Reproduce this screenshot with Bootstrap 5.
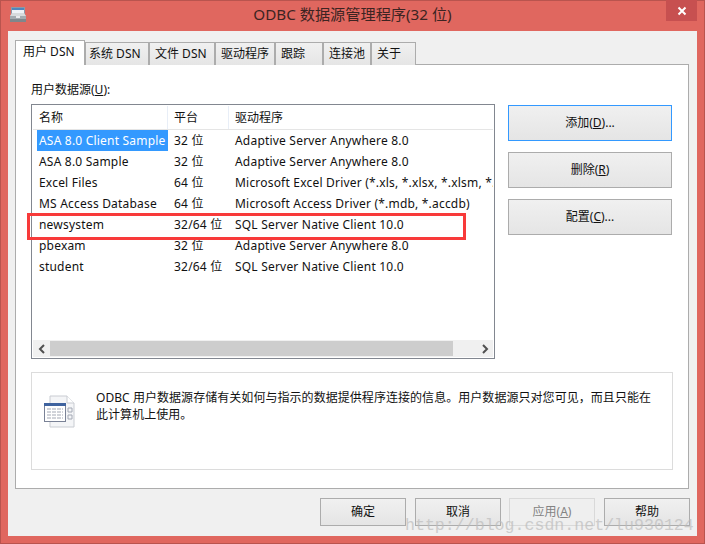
<!DOCTYPE html>
<html lang="zh">
  <head>
    <meta charset="UTF-8" />
    <title>ODBC 数据源管理程序(32 位)</title>
    <link href="https://cdn.jsdelivr.net/npm/bootstrap@5.3.0/dist/css/bootstrap.min.css" rel="stylesheet" />
    <style>
      html, body { height: 100%; }
      body {
        background: #e0675f;
        font-family: "Noto Sans", "Noto Sans CJK SC", sans-serif;
        font-size: 12px;
        line-height: 16px;
        color: #111;
        overflow: hidden;
      }
      .win { width: 705px; height: 544px; position: relative; border: 1px solid #b9544e; padding: 0 7px 7px; }
      .win-title { height: 30px; position: relative; }
      .win-icon { position: absolute; left: 2px; top: 6px; }
      .win-name { flex: 1; text-align: center; font-size: 15.2px; line-height: 27px; color: #3c2422; }
      .win-close { position: absolute; right: 0; top: -1px; width: 31px; height: 21px; background: #c75050; }
      .win-body { height: 505px; background: #f0f0f0; padding: 9px 7px 0; }
      .dlg-tabs { height: 25px; margin-bottom: -1px; position: relative; z-index: 1; align-items: flex-end; }
      .dlg-tab {
        height: 23px; border: 1px solid #acacac; border-bottom: 0; padding-left: 5px;
        background: linear-gradient(#f0f0f0, #e5e5e5); line-height: 22px;
      }
      .dlg-tab.on { height: 25px; width: 70px; background: #fff; padding-left: 7px; }
      .dlg-tab:nth-child(2) { width: 64px; padding-left: 3px; }
      .dlg-tab:nth-child(3) { width: 66px; }
      .dlg-tab:nth-child(4) { width: 60px; }
      .dlg-tab:nth-child(5) { width: 48px; }
      .dlg-tab:nth-child(6) { width: 48px; }
      .dlg-tab:nth-child(7) { width: 45px; }
      .dlg-page { height: 425px; width: 674px; background: #fff; border: 1px solid #acacac; padding: 17px 15px 0; }
      .src-label { margin-bottom: 6px; }
      .src-list { width: 464px; height: 255px; border: 1px solid #828790; padding: 1px; position: relative; }
      .src-head { height: 24px; border-bottom: 1px solid #e5e5e5; }
      .src-head div { line-height: 23px; padding-left: 6px; }
      .src-head .col-a, .src-head .col-b { border-right: 1px solid #e8eef7; }
      .col-a { width: 135px; flex: none; }
      .col-b { width: 61px; flex: none; }
      .col-c { flex: 1; overflow: hidden; white-space: nowrap; }
      .src-rows { flex: 1; }
      .src-row { height: 21px; line-height: 21px; letter-spacing: .2px; }
      .src-row > div { padding-left: 6px; white-space: nowrap; }
      .src-sel { display: inline-block; background: #3399ff; color: #fff; margin-left: -2px; width: 131px; padding-left: 2px; height: 21px; }
      .red-mark { position: absolute; left: -5px; top: 108px; width: 439px; height: 27px; border: 3px solid #f83a3a; }
      .src-scroll { height: 17px; background: #f0f0f0; margin-top: auto; }
      .src-scroll .thumb { flex: 1; background: #cdcdcd; height: 15px; margin-right: 23px; }
      .src-scroll .arrow { width: 17px; flex: none; text-align: center; }
      .side-btns { width: 164px; margin-left: 13px; margin-top: 1px; gap: 11px; }
      .win-btn {
        display: block; border: 1px solid #acacac; background: linear-gradient(#f0f0f0, #e5e5e5);
        color: #111; font-size: 12px; line-height: 16px; padding: 0; border-radius: 0; text-align: center;
      }
      .side-btns .win-btn { height: 36px; }
      .win-btn.act { border-color: #3399ff; }
      .win-btn.off { color: #838383; border-color: #d9d9d9; background: #efefef; }
      .info-box { height: 98px; width: 642px; border: 1px solid #dcdcdc; margin-top: 13px; padding: 16px 12px; }
      .info-icon { margin-top: 6px; }
      .info-text { line-height: 17px; margin-left: 20px; width: 565px; letter-spacing: .05px; }
      .dlg-foot { gap: 9px; padding-top: 9px; padding-left: 305px; }
      .dlg-foot .win-btn { width: 86px; height: 28px; }
      .dlg-foot .win-btn.off { margin-left: -1px; }
      .mark-text {
        position: absolute; left: 404px; top: 515px; font-family: "Liberation Mono", monospace;
        font-size: 16.6px; line-height: 20px; color: #bdbdbd; opacity: .7; pointer-events: none;
      }
      u { text-underline-offset: 1px; }
    </style>
  </head>
  <body>
    <div class="win">
      <!-- title bar -->
      <div class="win-title d-flex">
        <svg class="win-icon" width="16" height="16" viewBox="0 0 16 16">
          <rect x="1.5" y="0.5" width="13" height="8" fill="#eef2f6" stroke="#8a9aa8" />
          <rect x="2" y="1" width="12" height="2" fill="#4f86bd" />
          <path d="M0 9l2-3h12l2 3v6H0z" fill="#a4abb0" />
          <path d="M0 9l2-3h12l2 3z" fill="#d6dadc" />
          <path d="M0 12h16v3H0z" fill="#7f878c" />
          <rect x="6" y="9" width="4" height="2" fill="#e8eaec" />
        </svg>
        <div class="win-name">ODBC 数据源管理程序(32 位)</div>
        <div class="win-close d-flex align-items-center justify-content-center">
          <svg width="10" height="10" viewBox="0 0 10 10"><path d="M1.5 1.5l7 7M8.5 1.5l-7 7" stroke="#fff" stroke-width="2" /></svg>
        </div>
      </div>

      <div class="win-body">
        <div class="dlg-tabs d-flex">
          <div class="dlg-tab on">用户 DSN</div>
          <div class="dlg-tab">系统 DSN</div>
          <div class="dlg-tab">文件 DSN</div>
          <div class="dlg-tab">驱动程序</div>
          <div class="dlg-tab">跟踪</div>
          <div class="dlg-tab">连接池</div>
          <div class="dlg-tab">关于</div>
        </div>

        <div class="dlg-page">
          <div class="src-label">用户数据源(<u>U</u>):</div>
          <div class="d-flex">
            <div class="src-list d-flex flex-column">
              <div class="src-head d-flex">
                <div class="col-a">名称</div>
                <div class="col-b">平台</div>
                <div class="col-c">驱动程序</div>
              </div>
              <div class="src-rows" id="srcRows"></div>
              <div class="src-scroll d-flex align-items-center">
                <div class="arrow"><svg width="8" height="10" viewBox="0 0 8 10"><path d="M6 1L2 5l4 4" fill="none" stroke="#505050" stroke-width="2" /></svg></div>
                <div class="thumb"></div>
                <div class="arrow"><svg width="8" height="10" viewBox="0 0 8 10"><path d="M2 1l4 4-4 4" fill="none" stroke="#505050" stroke-width="2" /></svg></div>
              </div>
              <div class="red-mark"></div>
            </div>
            <div class="side-btns d-flex flex-column">
              <button type="button" class="btn win-btn act">添加(<u>D</u>)...</button>
              <button type="button" class="btn win-btn">删除(<u>R</u>)</button>
              <button type="button" class="btn win-btn">配置(<u>C</u>)...</button>
            </div>
          </div>

          <div class="info-box d-flex">
            <svg width="32" height="34" viewBox="0 0 32 34" class="info-icon flex-shrink-0">
              <path d="M6 1h17l7 7v24H6z" fill="#f4f5f7" stroke="#c9ccd2" />
              <path d="M23 1v7h7" fill="#fff" stroke="#c9ccd2" />
              <rect x="0.5" y="8.5" width="21" height="18" fill="#fff" stroke="#7a8296" />
              <rect x="0" y="8" width="22" height="3" fill="#3f639f" />
              <path d="M3 14h16M3 17h16M3 20h16M3 23h16" stroke="#a3a8b4" stroke-dasharray="4 1" />
              <path d="M24 13h4v4h-4zM24 20h4v4h-4z" fill="none" stroke="#a3a8b4" />
            </svg>
            <div class="info-text">ODBC 用户数据源存储有关如何与指示的数据提供程序连接的信息。用户数据源只对您可见，而且只能在此计算机上使用。</div>
          </div>
        </div>

        <div class="dlg-foot d-flex">
          <button type="button" class="btn win-btn">确定</button>
          <button type="button" class="btn win-btn">取消</button>
          <button type="button" class="btn win-btn off">应用(<u>A</u>)</button>
          <button type="button" class="btn win-btn">帮助</button>
        </div>
      </div>
      <div class="mark-text">http://blog.csdn.net/lu930124</div>
    </div>

    <script>
      const sources = [
        ["ASA 8.0 Client Sample", "32 位", "Adaptive Server Anywhere 8.0"],
        ["ASA 8.0 Sample", "32 位", "Adaptive Server Anywhere 8.0"],
        ["Excel Files", "64 位", "Microsoft Excel Driver (*.xls, *.xlsx, *.xlsm, *.xlsb)"],
        ["MS Access Database", "64 位", "Microsoft Access Driver (*.mdb, *.accdb)"],
        ["newsystem", "32/64 位", "SQL Server Native Client 10.0"],
        ["pbexam", "32 位", "Adaptive Server Anywhere 8.0"],
        ["student", "32/64 位", "SQL Server Native Client 10.0"],
      ];
      document.getElementById("srcRows").innerHTML = sources
        .map((s, i) => `
          <div class="src-row d-flex">
            <div class="col-a">${i === 0 ? `<span class="src-sel">${s[0]}</span>` : s[0]}</div>
            <div class="col-b">${s[1]}</div>
            <div class="col-c">${s[2]}</div>
          </div>`)
        .join("");
    </script>
    <script src="https://cdn.jsdelivr.net/npm/bootstrap@5.3.0/dist/js/bootstrap.bundle.min.js"></script>
  </body>
</html>
